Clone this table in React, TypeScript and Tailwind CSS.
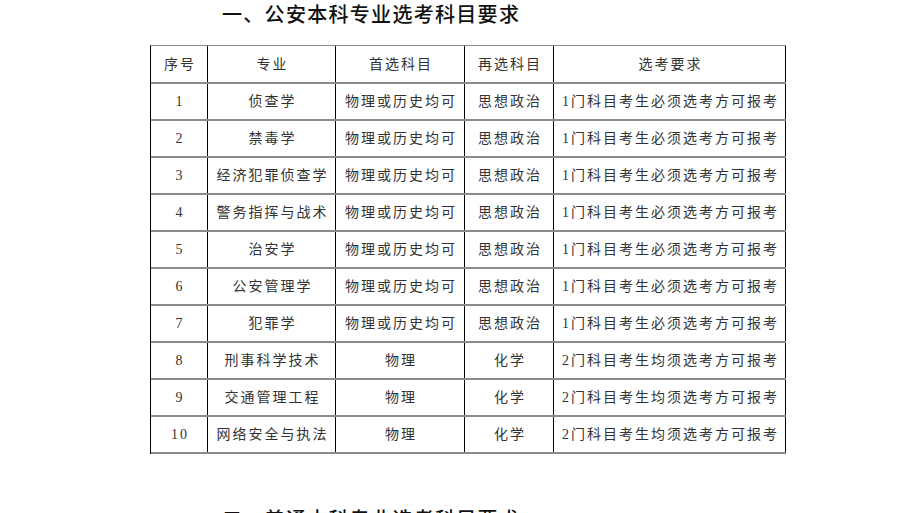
import React from "react";

const rows: [string, string, string, string, string][] = [
  ["1", "侦查学", "物理或历史均可", "思想政治", "1门科目考生必须选考方可报考"],
  ["2", "禁毒学", "物理或历史均可", "思想政治", "1门科目考生必须选考方可报考"],
  ["3", "经济犯罪侦查学", "物理或历史均可", "思想政治", "1门科目考生必须选考方可报考"],
  ["4", "警务指挥与战术", "物理或历史均可", "思想政治", "1门科目考生必须选考方可报考"],
  ["5", "治安学", "物理或历史均可", "思想政治", "1门科目考生必须选考方可报考"],
  ["6", "公安管理学", "物理或历史均可", "思想政治", "1门科目考生必须选考方可报考"],
  ["7", "犯罪学", "物理或历史均可", "思想政治", "1门科目考生必须选考方可报考"],
  ["8", "刑事科学技术", "物理", "化学", "2门科目考生均须选考方可报考"],
  ["9", "交通管理工程", "物理", "化学", "2门科目考生均须选考方可报考"],
  ["10", "网络安全与执法", "物理", "化学", "2门科目考生均须选考方可报考"],
];

const cellFont = {
  fontFamily: '"Liberation Serif", "Noto Sans CJK SC", serif',
};

function Row({ cells, header }: { cells: string[]; header?: boolean }) {
  return (
    <div
      className={`grid grid-cols-[57px_128px_129px_89px_232px] border-b-2 border-[#8a8a8a] ${
        header ? "h-[38px]" : "h-[37px]"
      }`}
    >
      {cells.map((c, i) => (
        <div
          key={i}
          className="flex items-center justify-center border-r border-black text-[14px] text-[#333] tracking-[2px] pl-[2px] whitespace-nowrap"
          style={cellFont}
        >
          {c}
        </div>
      ))}
    </div>
  );
}

export default function App() {
  return (
    <div className="w-[912px] h-[513px] overflow-hidden bg-white">
      <div
        className="ml-[222px] h-[28px] leading-[28px] text-[20px] font-medium tracking-[1.3px] text-[#111]"
        style={{ fontFamily: '"Noto Sans CJK SC", sans-serif' }}
      >
        一、公安本科专业选考科目要求
      </div>
      <div className="ml-[150px] mt-[17px] w-[636px] border-l border-black border-t border-t-[#8a8a8a]">
        <Row header cells={["序号", "专业", "首选科目", "再选科目", "选考要求"]} />
        {rows.map((r) => (
          <Row key={r[0]} cells={r} />
        ))}
      </div>
      <div
        className="ml-[222px] mt-[51px] h-[28px] leading-[28px] text-[20px] font-medium tracking-[1.3px] text-[#111]"
        style={{ fontFamily: '"Noto Sans CJK SC", sans-serif' }}
      >
        二、普通本科专业选考科目要求
      </div>
    </div>
  );
}
